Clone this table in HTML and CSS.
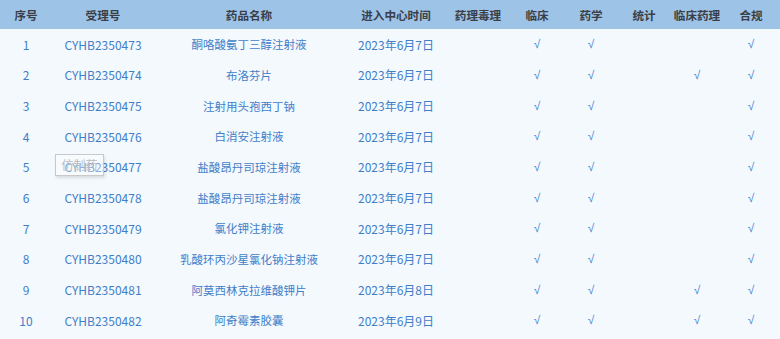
FILE: index.html
```html
<!DOCTYPE html>
<html lang="zh">
<head>
<meta charset="utf-8">
<title>受理品种列表</title>
<link rel="stylesheet" href="styles.css">
</head>
<body>
<div class="wrap">
<table class="grid">
<colgroup>
<col class="c1"><col class="c2"><col class="c3"><col class="c4"><col class="c5"><col class="c6"><col class="c7"><col class="c8"><col class="c9"><col class="c10">
</colgroup>
<thead>
<tr><th>序号</th><th>受理号</th><th>药品名称</th><th>进入中心时间</th><th>药理毒理</th><th>临床</th><th>药学</th><th>统计</th><th>临床药理</th><th>合规</th></tr>
</thead>
<tbody>
<tr><td>1</td><td>CYHB2350473</td><td class="name">酮咯酸氨丁三醇注射液</td><td>2023年6月7日</td><td></td><td class="ck">√</td><td class="ck">√</td><td></td><td></td><td class="ck">√</td></tr>
<tr><td>2</td><td>CYHB2350474</td><td class="name">布洛芬片</td><td>2023年6月7日</td><td></td><td class="ck">√</td><td class="ck">√</td><td></td><td class="ck">√</td><td class="ck">√</td></tr>
<tr><td>3</td><td>CYHB2350475</td><td class="name">注射用头孢西丁钠</td><td>2023年6月7日</td><td></td><td class="ck">√</td><td class="ck">√</td><td></td><td></td><td class="ck">√</td></tr>
<tr><td>4</td><td>CYHB2350476</td><td class="name">白消安注射液</td><td>2023年6月7日</td><td></td><td class="ck">√</td><td class="ck">√</td><td></td><td></td><td class="ck">√</td></tr>
<tr><td>5</td><td>CYHB2350477</td><td class="name">盐酸昂丹司琼注射液</td><td>2023年6月7日</td><td></td><td class="ck">√</td><td class="ck">√</td><td></td><td></td><td class="ck">√</td></tr>
<tr><td>6</td><td>CYHB2350478</td><td class="name">盐酸昂丹司琼注射液</td><td>2023年6月7日</td><td></td><td class="ck">√</td><td class="ck">√</td><td></td><td></td><td class="ck">√</td></tr>
<tr><td>7</td><td>CYHB2350479</td><td class="name">氯化钾注射液</td><td>2023年6月7日</td><td></td><td class="ck">√</td><td class="ck">√</td><td></td><td></td><td class="ck">√</td></tr>
<tr><td>8</td><td>CYHB2350480</td><td class="name">乳酸环丙沙星氯化钠注射液</td><td>2023年6月7日</td><td></td><td class="ck">√</td><td class="ck">√</td><td></td><td></td><td class="ck">√</td></tr>
<tr><td>9</td><td>CYHB2350481</td><td class="name">阿莫西林克拉维酸钾片</td><td>2023年6月8日</td><td></td><td class="ck">√</td><td class="ck">√</td><td></td><td class="ck">√</td><td class="ck">√</td></tr>
<tr><td>10</td><td>CYHB2350482</td><td class="name">阿奇霉素胶囊</td><td>2023年6月9日</td><td></td><td class="ck">√</td><td class="ck">√</td><td></td><td class="ck">√</td><td class="ck">√</td></tr>
</tbody>
</table>
<div class="tooltip">仿制药</div>
</div>
</body>
</html>
```
FILE: styles.css
```css
html, body {
  margin: 0;
  padding: 0;
  background: #f4f9fe;
}
body {
  font-family: "Noto Sans CJK SC", "Noto Sans", sans-serif;
  font-size: 12px;
  overflow: hidden;
}
.wrap {
  position: relative;
  width: 780px;
  height: 339px;
}
.grid {
  width: 780px;
  table-layout: fixed;
  border-collapse: collapse;
  border-spacing: 0;
}
.c1 { width: 52px; }
.c2 { width: 102px; }
.c3 { width: 190px; }
.c4 { width: 104px; }
.c5 { width: 60px; }
.c6 { width: 58px; }
.c7 { width: 50px; }
.c8 { width: 56px; }
.c9 { width: 50px; }
.c10 { width: 58px; }
.grid th {
  height: 29px;
  padding: 0;
  background: #9dc3e7;
  color: #3a3f47;
  font-size: 11.6px;
  font-weight: 700;
  text-align: center;
  white-space: nowrap;
}
.grid td {
  height: 30.67px;
  padding: 0;
  color: #3f7ec8;
  text-align: center;
  white-space: nowrap;
}
.grid td.name {
  font-size: 11.5px;
}
.grid td.ck {
  font-family: "Liberation Sans", "DejaVu Sans", sans-serif;
  font-size: 12px;
  color: #4a86cf;
}
.tooltip {
  position: absolute;
  left: 55px;
  top: 154px;
  width: 47px;
  height: 20px;
  line-height: 20px;
  border: 1px solid #c9c9c9;
  background: rgba(255, 255, 255, 0.35);
  color: #b9bcc0;
  text-align: center;
  box-shadow: 1px 2px 3px rgba(0, 0, 0, 0.12);
}
```
